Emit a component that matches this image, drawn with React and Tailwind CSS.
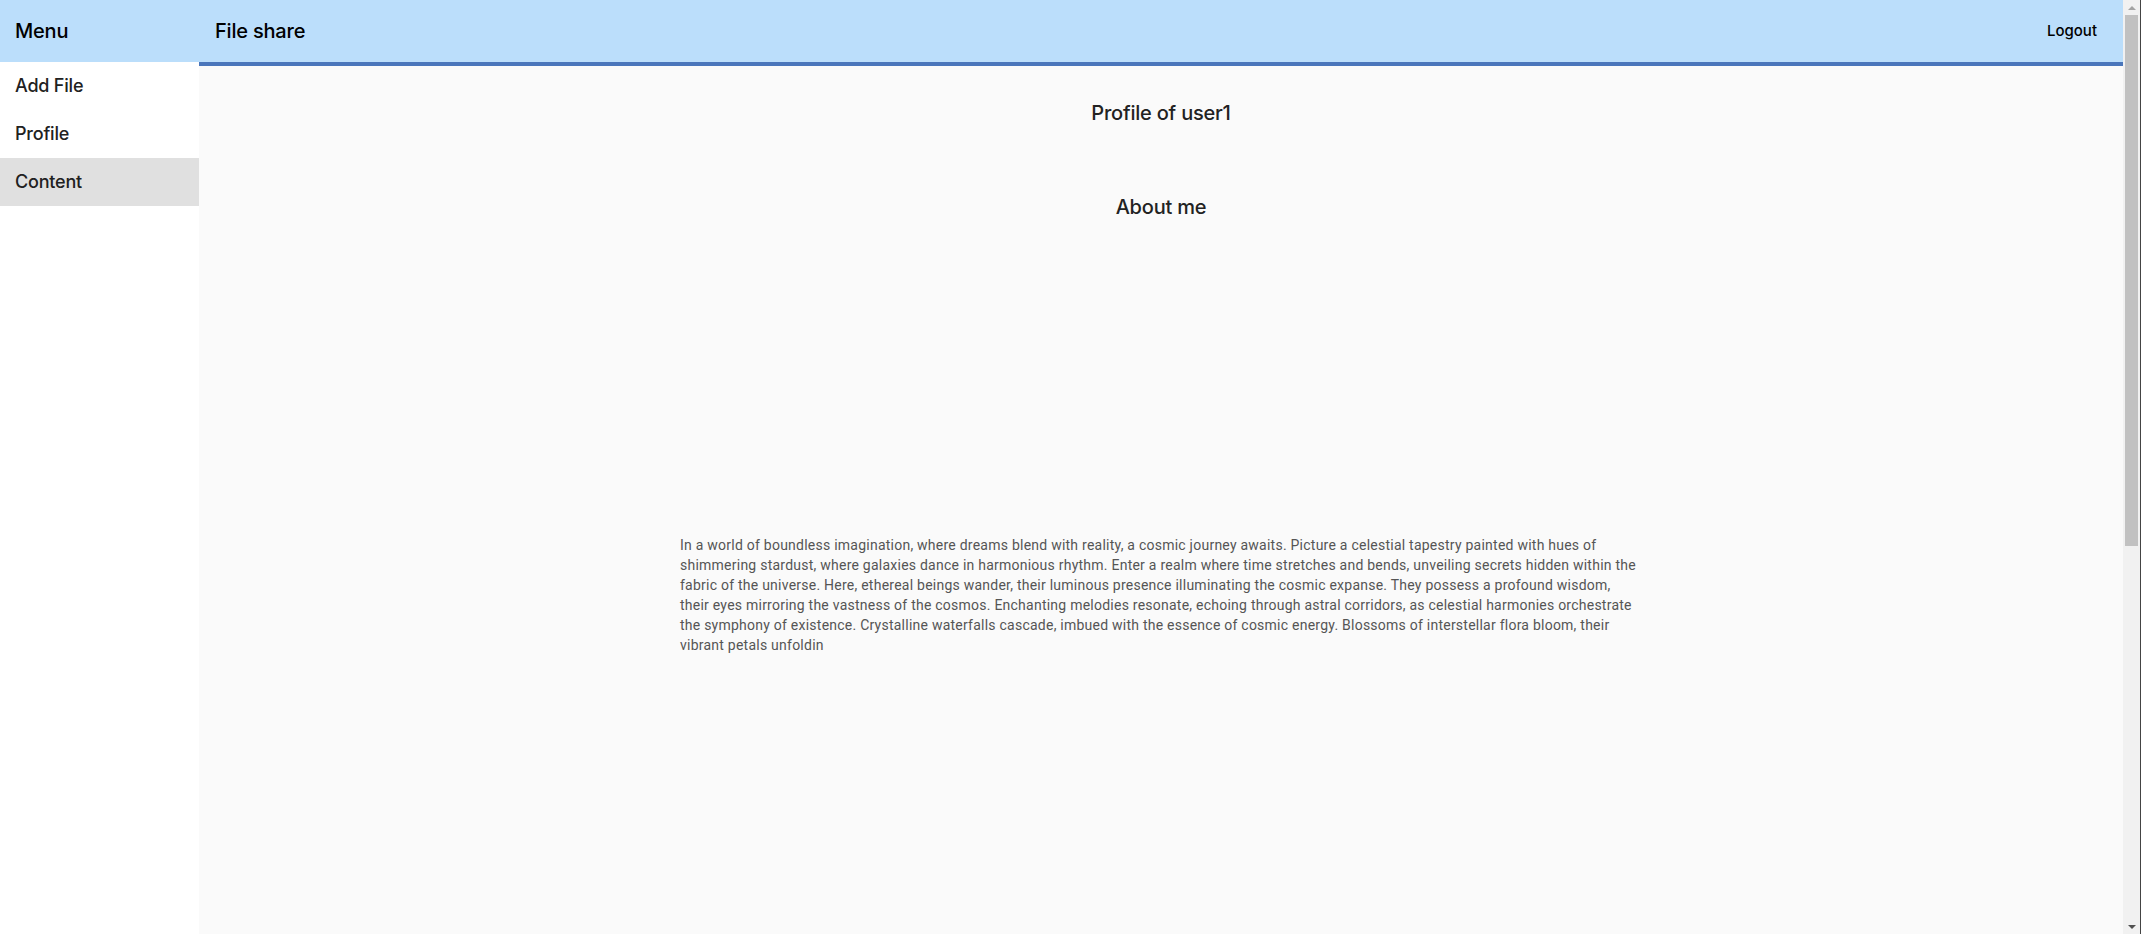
export default function App() {
  const para =
    "In a world of boundless imagination, where dreams blend with reality, a cosmic journey awaits. Picture a celestial tapestry painted with hues of shimmering stardust, where galaxies dance in harmonious rhythm. Enter a realm where time stretches and bends, unveiling secrets hidden within the fabric of the universe. Here, ethereal beings wander, their luminous presence illuminating the cosmic expanse. They possess a profound wisdom, their eyes mirroring the vastness of the cosmos. Enchanting melodies resonate, echoing through astral corridors, as celestial harmonies orchestrate the symphony of existence. Crystalline waterfalls cascade, imbued with the essence of cosmic energy. Blossoms of interstellar flora bloom, their vibrant petals unfoldin";
  const items = ["Add File", "Profile", "Content"];
  return (
    <div className="flex h-[934px] overflow-hidden font-['Inter',sans-serif] text-[#212121]">
      <aside className="w-[199px] shrink-0 bg-white flex flex-col">
        <div className="h-[62px] bg-[#bbdefb] flex items-center px-[15px] text-[20px] font-medium text-black tracking-[-0.2px]">
          Menu
        </div>
        {items.map((it) => (
          <div
            key={it}
            className={
              "h-[48px] flex items-center px-[15px] pb-[2px] text-[18px] font-medium tracking-[-0.2px] " +
              (it === "Content" ? "bg-[#e0e0e0]" : "")
            }
          >
            {it}
          </div>
        ))}
      </aside>
      <div className="flex-1 flex flex-col bg-[#fafafa] min-w-0">
        <header className="h-[66px] shrink-0 bg-[#bbdefb] border-b-4 border-[#4a76bb] flex items-center justify-between pl-[16px] pr-[26px]">
          <span className="text-[20px] font-medium text-black tracking-[-0.2px]">File share</span>
          <span className="text-[15px] font-medium text-black">Logout</span>
        </header>
        <main className="flex flex-col items-center pt-[34px]">
          <h2 className="text-[20px] leading-[26px] font-medium text-[#222] tracking-[-0.2px]">Profile of user1</h2>
          <h3 className="mt-[68px] text-[20px] leading-[26px] font-medium text-[#222] tracking-[-0.2px]">About me</h3>
          <div className="h-[315px]" />
          <p className="w-[962px] text-[14px] leading-[20px] tracking-[0.24px] text-[#555] font-['Roboto',sans-serif]">{para}</p>
        </main>
      </div>
      <div className="w-[18px] shrink-0 bg-[#f1f1f1] flex">
        <div className="flex-1 flex flex-col items-center">
          <div className="h-[15px] w-full flex items-center justify-center">
            <div className="w-0 h-0 border-l-[4px] border-r-[4px] border-b-[4px] border-l-transparent border-r-transparent border-b-[#a3a3a3]" />
          </div>
          <div className="h-[531px] w-[13px] bg-[#c1c1c1]" />
          <div className="flex-1" />
          <div className="h-[15px] w-full flex items-center justify-center">
            <div className="w-0 h-0 border-l-[4px] border-r-[4px] border-t-[4px] border-l-transparent border-r-transparent border-t-[#505050]" />
          </div>
        </div>
        <div className="w-[1px] bg-[#444]" />
      </div>
    </div>
  );
}
